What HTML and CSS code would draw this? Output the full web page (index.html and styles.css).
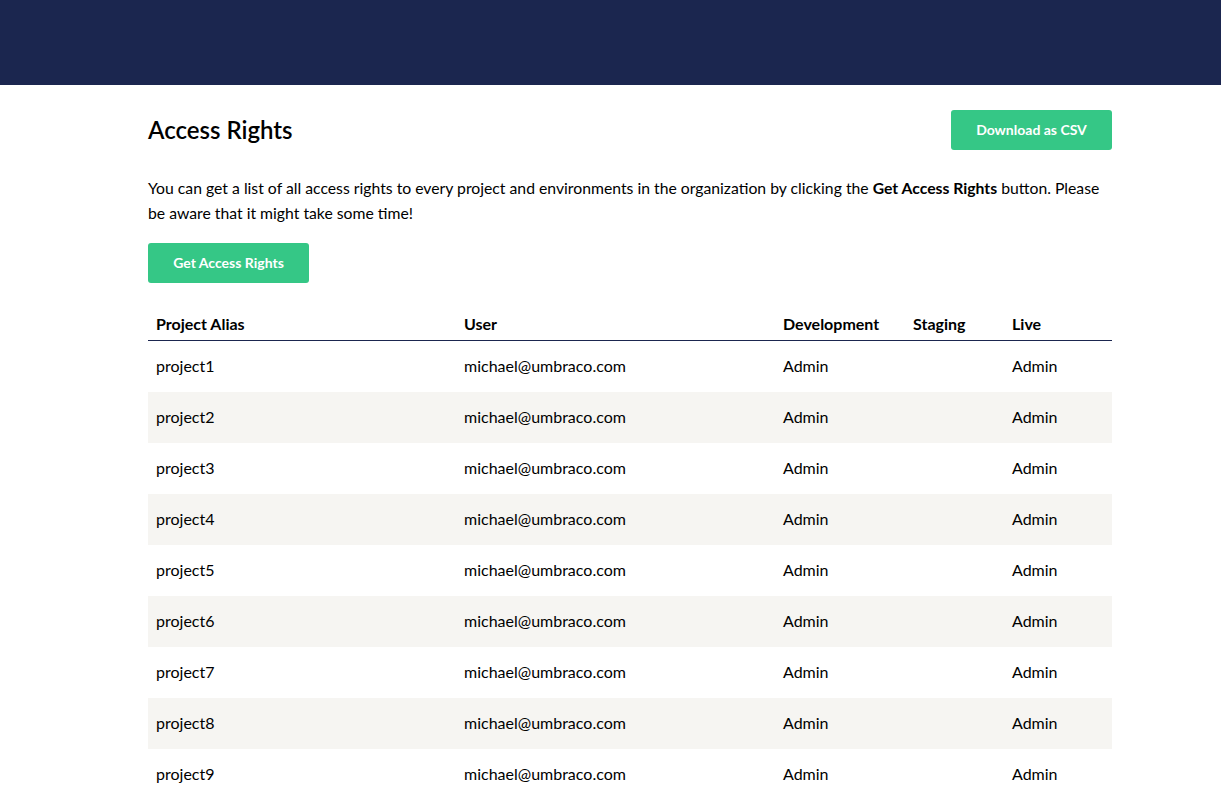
FILE: index.html
```html
<!DOCTYPE html>
<html lang="en">
<head>
<meta charset="utf-8">
<title>Access Rights</title>
<link rel="stylesheet" href="styles.css">
</head>
<body>
<header class="topbar"></header>
<main class="content">
  <div class="title-row">
    <h1 class="title">Access Rights</h1>
    <button class="btn">Download as CSV</button>
  </div>
  <p class="intro">You can get a list of all access rights to every project and environments in the organization by clicking the <strong>Get Access Rights</strong> button. Please be aware that it might take some time!</p>
  <button class="btn btn-get">Get Access Rights</button>
  <table class="rights">
    <colgroup>
      <col class="c-alias"><col class="c-user"><col class="c-dev"><col class="c-stage"><col class="c-live">
    </colgroup>
    <thead>
      <tr><th>Project Alias</th><th>User</th><th>Development</th><th>Staging</th><th>Live</th></tr>
    </thead>
    <tbody>
      <tr><td>project1</td><td>michael@umbraco.com</td><td>Admin</td><td></td><td>Admin</td></tr>
      <tr><td>project2</td><td>michael@umbraco.com</td><td>Admin</td><td></td><td>Admin</td></tr>
      <tr><td>project3</td><td>michael@umbraco.com</td><td>Admin</td><td></td><td>Admin</td></tr>
      <tr><td>project4</td><td>michael@umbraco.com</td><td>Admin</td><td></td><td>Admin</td></tr>
      <tr><td>project5</td><td>michael@umbraco.com</td><td>Admin</td><td></td><td>Admin</td></tr>
      <tr><td>project6</td><td>michael@umbraco.com</td><td>Admin</td><td></td><td>Admin</td></tr>
      <tr><td>project7</td><td>michael@umbraco.com</td><td>Admin</td><td></td><td>Admin</td></tr>
      <tr><td>project8</td><td>michael@umbraco.com</td><td>Admin</td><td></td><td>Admin</td></tr>
      <tr><td>project9</td><td>michael@umbraco.com</td><td>Admin</td><td></td><td>Admin</td></tr>
    </tbody>
  </table>
</main>
</body>
</html>
```

FILE: styles.css
```css
* { box-sizing: border-box; }
html, body { margin: 0; padding: 0; }
body {
  font-family: Lato, "Liberation Sans", sans-serif;
  color: #000;
  background: #fff;
  font-size: 16px;
}
.topbar {
  height: 85px;
  background: #1b264f;
}
.content {
  width: 964px;
  margin-left: 148px;
  padding-top: 25px;
}
.title-row {
  display: flex;
  align-items: center;
  justify-content: space-between;
  height: 40px;
}
.title {
  margin: 0;
  font-size: 24px;
  font-weight: 600;
  line-height: 30px;
}
.btn {
  height: 40px;
  width: 161px;
  border: none;
  border-radius: 3px;
  background: #35c786;
  color: #fff;
  font-family: Lato, "Liberation Sans", sans-serif;
  font-size: 14px;
  font-weight: 700;
  padding: 0 0 1px;
  cursor: pointer;
}
.intro {
  margin: 25px 0 18px;
  line-height: 25px;
  font-size: 15.75px;
}
.intro strong { font-weight: 700; }
.btn-get { display: block; }
.rights {
  margin-top: 22px;
  width: 964px;
  border-collapse: collapse;
  table-layout: fixed;
}
.c-alias { width: 308px; }
.c-user { width: 319px; }
.c-dev { width: 130px; }
.c-stage { width: 99px; }
.c-live { width: 108px; }
.rights th {
  text-align: left;
  font-weight: 700;
  padding: 9px 8px 6px;
  line-height: 20px;
  border-bottom: 1px solid #1b264f;
}
.rights td {
  height: 51px;
  padding: 0 8px;
  line-height: 20px;
  vertical-align: middle;
}
.rights tbody tr:nth-child(even) td { background: #f6f5f2; }
```
